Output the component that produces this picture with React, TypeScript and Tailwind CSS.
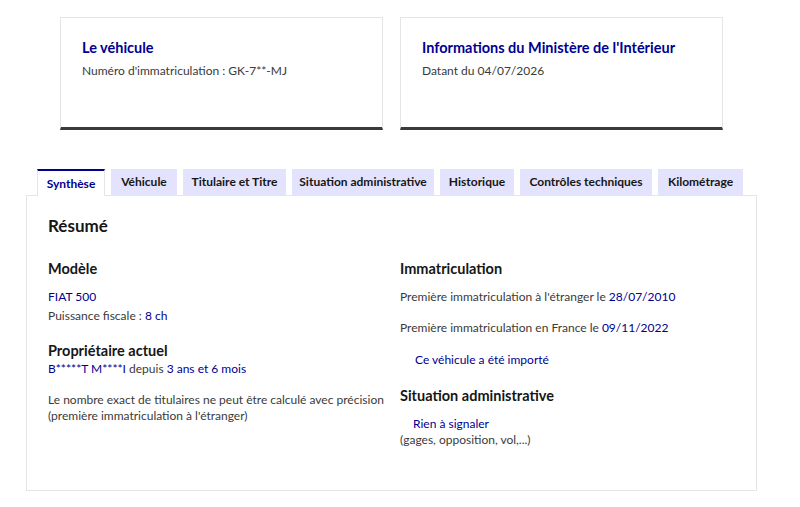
import React from 'react'

const tabs = [
  { label: "Synthèse", w: "w-[68px]" },
  { label: "Véhicule", w: "w-[66px]" },
  { label: "Titulaire et Titre", w: "w-[103px]" },
  { label: "Situation administrative", w: "w-[142px]" },
  { label: "Historique", w: "w-[74px]" },
  { label: "Contrôles techniques", w: "w-[132px]" },
  { label: "Kilométrage", w: "w-[85px]" },
]

function Card({ title, sub }: { title: string; sub: string }) {
  return (
    <div className="w-[323px] h-[113px] border border-[#e5e5e5] border-b-[3px] border-b-[#3a3a3a] px-[21px] pt-[20px]">
      <h2 className="text-[14.5px] leading-[20px] font-bold text-[#000091]">{title}</h2>
      <p className="mt-[5px] text-[12px] leading-[16px] text-[#3a3a3a]">{sub}</p>
    </div>
  )
}

export default function App() {
  return (
    <main className="w-[800px] h-[507px] bg-white text-[#3a3a3a] font-['Lato',sans-serif] overflow-hidden">
      <div className="flex gap-[17px] pl-[60px] pt-[17px]">
        <Card title="Le véhicule" sub="Numéro d'immatriculation : GK-7**-MJ" />
        <Card title="Informations du Ministère de l'Intérieur" sub="Datant du 04/07/2026" />
      </div>

      <div className="ml-[26px] mt-[39px] w-[731px]">
        <div className="flex gap-[6px] pl-[11px]">
          {tabs.map((t, i) =>
            i === 0 ? (
              <div key={t.label} className={`${t.w} h-[27px] -mb-px relative z-10 bg-white border-t-2 border-t-[#000091] border-x border-x-[#e5e5e5] flex items-center justify-center text-[12px] font-bold text-[#000091]`}>
                {t.label}
              </div>
            ) : (
              <div key={t.label} className={`${t.w} h-[26px] bg-[#e3e3fd] flex items-center justify-center text-[12px] font-bold text-[#161616]`}>
                {t.label}
              </div>
            )
          )}
        </div>

        <div className="h-[296px] border border-[#e5e5e5] pl-[21px] pt-[18px]">
          <h2 className="text-[17px] leading-[24px] font-bold text-[#161616]">Résumé</h2>

          <div className="grid grid-cols-[352px_1fr] mt-[21px] text-[12px] leading-[16px]">
            <div>
              <h3 className="text-[14.5px] leading-[20px] font-bold text-[#161616]">Modèle</h3>
              <p className="mt-[10px] text-[#000091]">FIAT 500</p>
              <p className="mt-[3px]">Puissance fiscale : <span className="text-[#000091]">8 ch</span></p>
              <h3 className="mt-[17px] text-[14.5px] leading-[20px] font-bold text-[#161616]">Propriétaire actuel</h3>
              <p>
                <span className="text-[#000091]">B*****T M****I</span> depuis <span className="text-[#000091]">3 ans et 6 mois</span>
              </p>
              <p className="mt-[15px]">
                Le nombre exact de titulaires ne peut être calculé avec précision<br />
                (première immatriculation à l'étranger)
              </p>
            </div>

            <div>
              <h3 className="text-[14.5px] leading-[20px] font-bold text-[#161616]">Immatriculation</h3>
              <p className="mt-[10px]">Première immatriculation à l'étranger le <span className="text-[#000091]">28/07/2010</span></p>
              <p className="mt-[15px]">Première immatriculation en France le <span className="text-[#000091]">09/11/2022</span></p>
              <p className="mt-[16px] pl-[15px] text-[#000091]">Ce véhicule a été importé</p>
              <h3 className="mt-[18px] text-[14.5px] leading-[20px] font-bold text-[#161616]">Situation administrative</h3>
              <p className="mt-[10px] pl-[13px] text-[#000091]">Rien à signaler</p>
              <p>(gages, opposition, vol,...)</p>
            </div>
          </div>
        </div>
      </div>
    </main>
  )
}
